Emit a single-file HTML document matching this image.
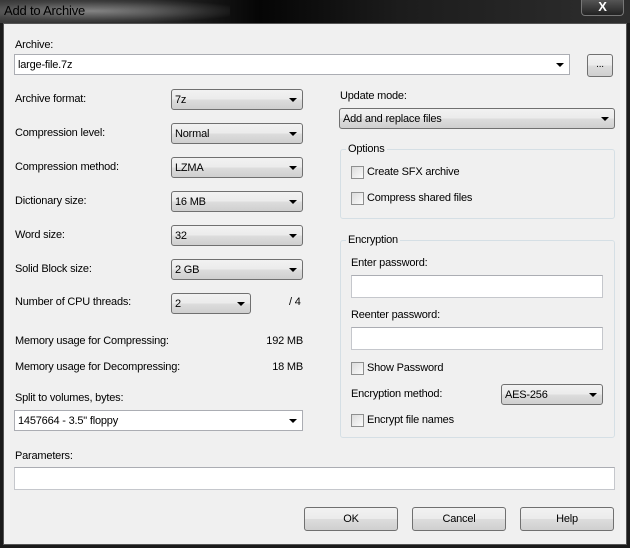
<!DOCTYPE html>
<html><head><style>
*{box-sizing:border-box;margin:0;padding:0}
body{width:630px;height:548px;overflow:hidden;background:#1a1a1a;font-family:"Liberation Sans",sans-serif;font-size:11px;letter-spacing:-0.2px;color:#000;position:relative}
.a{position:absolute;white-space:nowrap}
.title{left:0;top:0;width:630px;height:23px;background:linear-gradient(90deg,#3a3a3a 0,#2a2a2a 150px,#050505 260px,#1c1c1c 400px,#2e2e2e 630px)}
.glow{left:0;top:0;width:230px;height:22px;background:radial-gradient(ellipse at 40% 50%,rgba(200,200,200,.55),rgba(120,120,120,.2) 60%,rgba(0,0,0,0) 80%)}
.close{left:581px;top:0;width:43px;height:16px;border:1px solid #777;border-top:none;border-radius:0 0 4px 4px;background:linear-gradient(#555,#222);color:#fff;font-weight:bold;font-size:13px;text-align:center;line-height:14px}
.client{left:3px;top:23px;width:624px;height:522px;background:#f0f0f0;border:1px solid #555}
.combo{height:21px;border:1px solid #707070;border-radius:3px;background:linear-gradient(#f2f2f2 0,#ebebeb 50%,#dddddd 51%,#cfcfcf 100%);padding:4px 0 0 3px}
.combo.w{background:#fff;border-color:#abadb3;border-radius:0}
.arr{position:absolute;right:5px;top:8px;width:0;height:0;border-left:4px solid transparent;border-right:4px solid transparent;border-top:4px solid #000}
.inp{background:#fff;border:1px solid #c5c7cc;border-top-color:#abadb3}
.btn{height:24px;border:1px solid #707070;border-radius:3px;background:linear-gradient(#f2f2f2 0,#ebebeb 50%,#dddddd 51%,#cfcfcf 100%);text-align:center;line-height:22px}
.grp{border:1px solid #d5dfe5;border-radius:3px}
.gl{background:#f0f0f0;padding:0 2px}
.cb{width:13px;height:13px;border:1px solid #8e8f8f;background:linear-gradient(135deg,#dcdcdc,#fbfbfb)}
</style></head><body>
<div class="a title"></div><div class="a glow"></div>
<div class="a" style="left:4px;top:3px;color:#000;font-size:13px">Add to Archive</div>
<div class="a close">X</div>
<div class="a client"></div>

<div class="a" style="left:15px;top:39px">Archive:</div>
<div class="a combo w" style="left:14px;top:54px;width:556px">large-file.7z<span class="arr"></span></div>
<div class="a btn" style="left:587px;top:54px;width:26px;height:23px;line-height:20px;font-size:10px">...</div>

<div class="a" style="left:15px;top:93px">Archive format:</div>
<div class="a combo" style="left:171px;top:89px;width:132px">7z<span class="arr"></span></div>
<div class="a" style="left:15px;top:127px">Compression level:</div>
<div class="a combo" style="left:171px;top:123px;width:132px">Normal<span class="arr"></span></div>
<div class="a" style="left:15px;top:161px">Compression method:</div>
<div class="a combo" style="left:171px;top:157px;width:132px">LZMA<span class="arr"></span></div>
<div class="a" style="left:15px;top:195px">Dictionary size:</div>
<div class="a combo" style="left:171px;top:191px;width:132px">16 MB<span class="arr"></span></div>
<div class="a" style="left:15px;top:229px">Word size:</div>
<div class="a combo" style="left:171px;top:225px;width:132px">32<span class="arr"></span></div>
<div class="a" style="left:15px;top:263px">Solid Block size:</div>
<div class="a combo" style="left:171px;top:259px;width:132px">2 GB<span class="arr"></span></div>
<div class="a" style="left:15px;top:296px">Number of CPU threads:</div>
<div class="a combo" style="left:171px;top:293px;width:80px">2<span class="arr"></span></div>
<div class="a" style="left:289px;top:296px">/ 4</div>
<div class="a" style="left:15px;top:335px">Memory usage for Compressing:</div>
<div class="a" style="left:240px;top:335px;width:63px;text-align:right">192 MB</div>
<div class="a" style="left:15px;top:361px">Memory usage for Decompressing:</div>
<div class="a" style="left:240px;top:361px;width:63px;text-align:right">18 MB</div>
<div class="a" style="left:15px;top:392px">Split to volumes, bytes:</div>
<div class="a combo w" style="left:14px;top:410px;width:289px">1457664 - 3.5" floppy<span class="arr"></span></div>
<div class="a" style="left:15px;top:450px">Parameters:</div>
<div class="a inp" style="left:14px;top:467px;width:601px;height:23px"></div>

<div class="a" style="left:340px;top:90px">Update mode:</div>
<div class="a combo" style="left:339px;top:108px;width:276px">Add and replace files<span class="arr"></span></div>

<div class="a grp" style="left:340px;top:149px;width:275px;height:70px"></div>
<div class="a gl" style="left:346px;top:143px">Options</div>
<div class="a cb" style="left:351px;top:166px"></div>
<div class="a" style="left:367px;top:166px">Create SFX archive</div>
<div class="a cb" style="left:351px;top:192px"></div>
<div class="a" style="left:367px;top:192px">Compress shared files</div>

<div class="a grp" style="left:340px;top:240px;width:275px;height:198px"></div>
<div class="a gl" style="left:346px;top:234px">Encryption</div>
<div class="a" style="left:351px;top:257px">Enter password:</div>
<div class="a inp" style="left:351px;top:275px;width:252px;height:23px"></div>
<div class="a" style="left:351px;top:309px">Reenter password:</div>
<div class="a inp" style="left:351px;top:327px;width:252px;height:23px"></div>
<div class="a cb" style="left:351px;top:362px"></div>
<div class="a" style="left:367px;top:362px">Show Password</div>
<div class="a" style="left:351px;top:388px">Encryption method:</div>
<div class="a combo" style="left:501px;top:384px;width:102px">AES-256<span class="arr"></span></div>
<div class="a cb" style="left:351px;top:414px"></div>
<div class="a" style="left:367px;top:414px">Encrypt file names</div>

<div class="a btn" style="left:304px;top:507px;width:94px">OK</div>
<div class="a btn" style="left:412px;top:507px;width:94px">Cancel</div>
<div class="a btn" style="left:520px;top:507px;width:94px">Help</div>
</body></html>
